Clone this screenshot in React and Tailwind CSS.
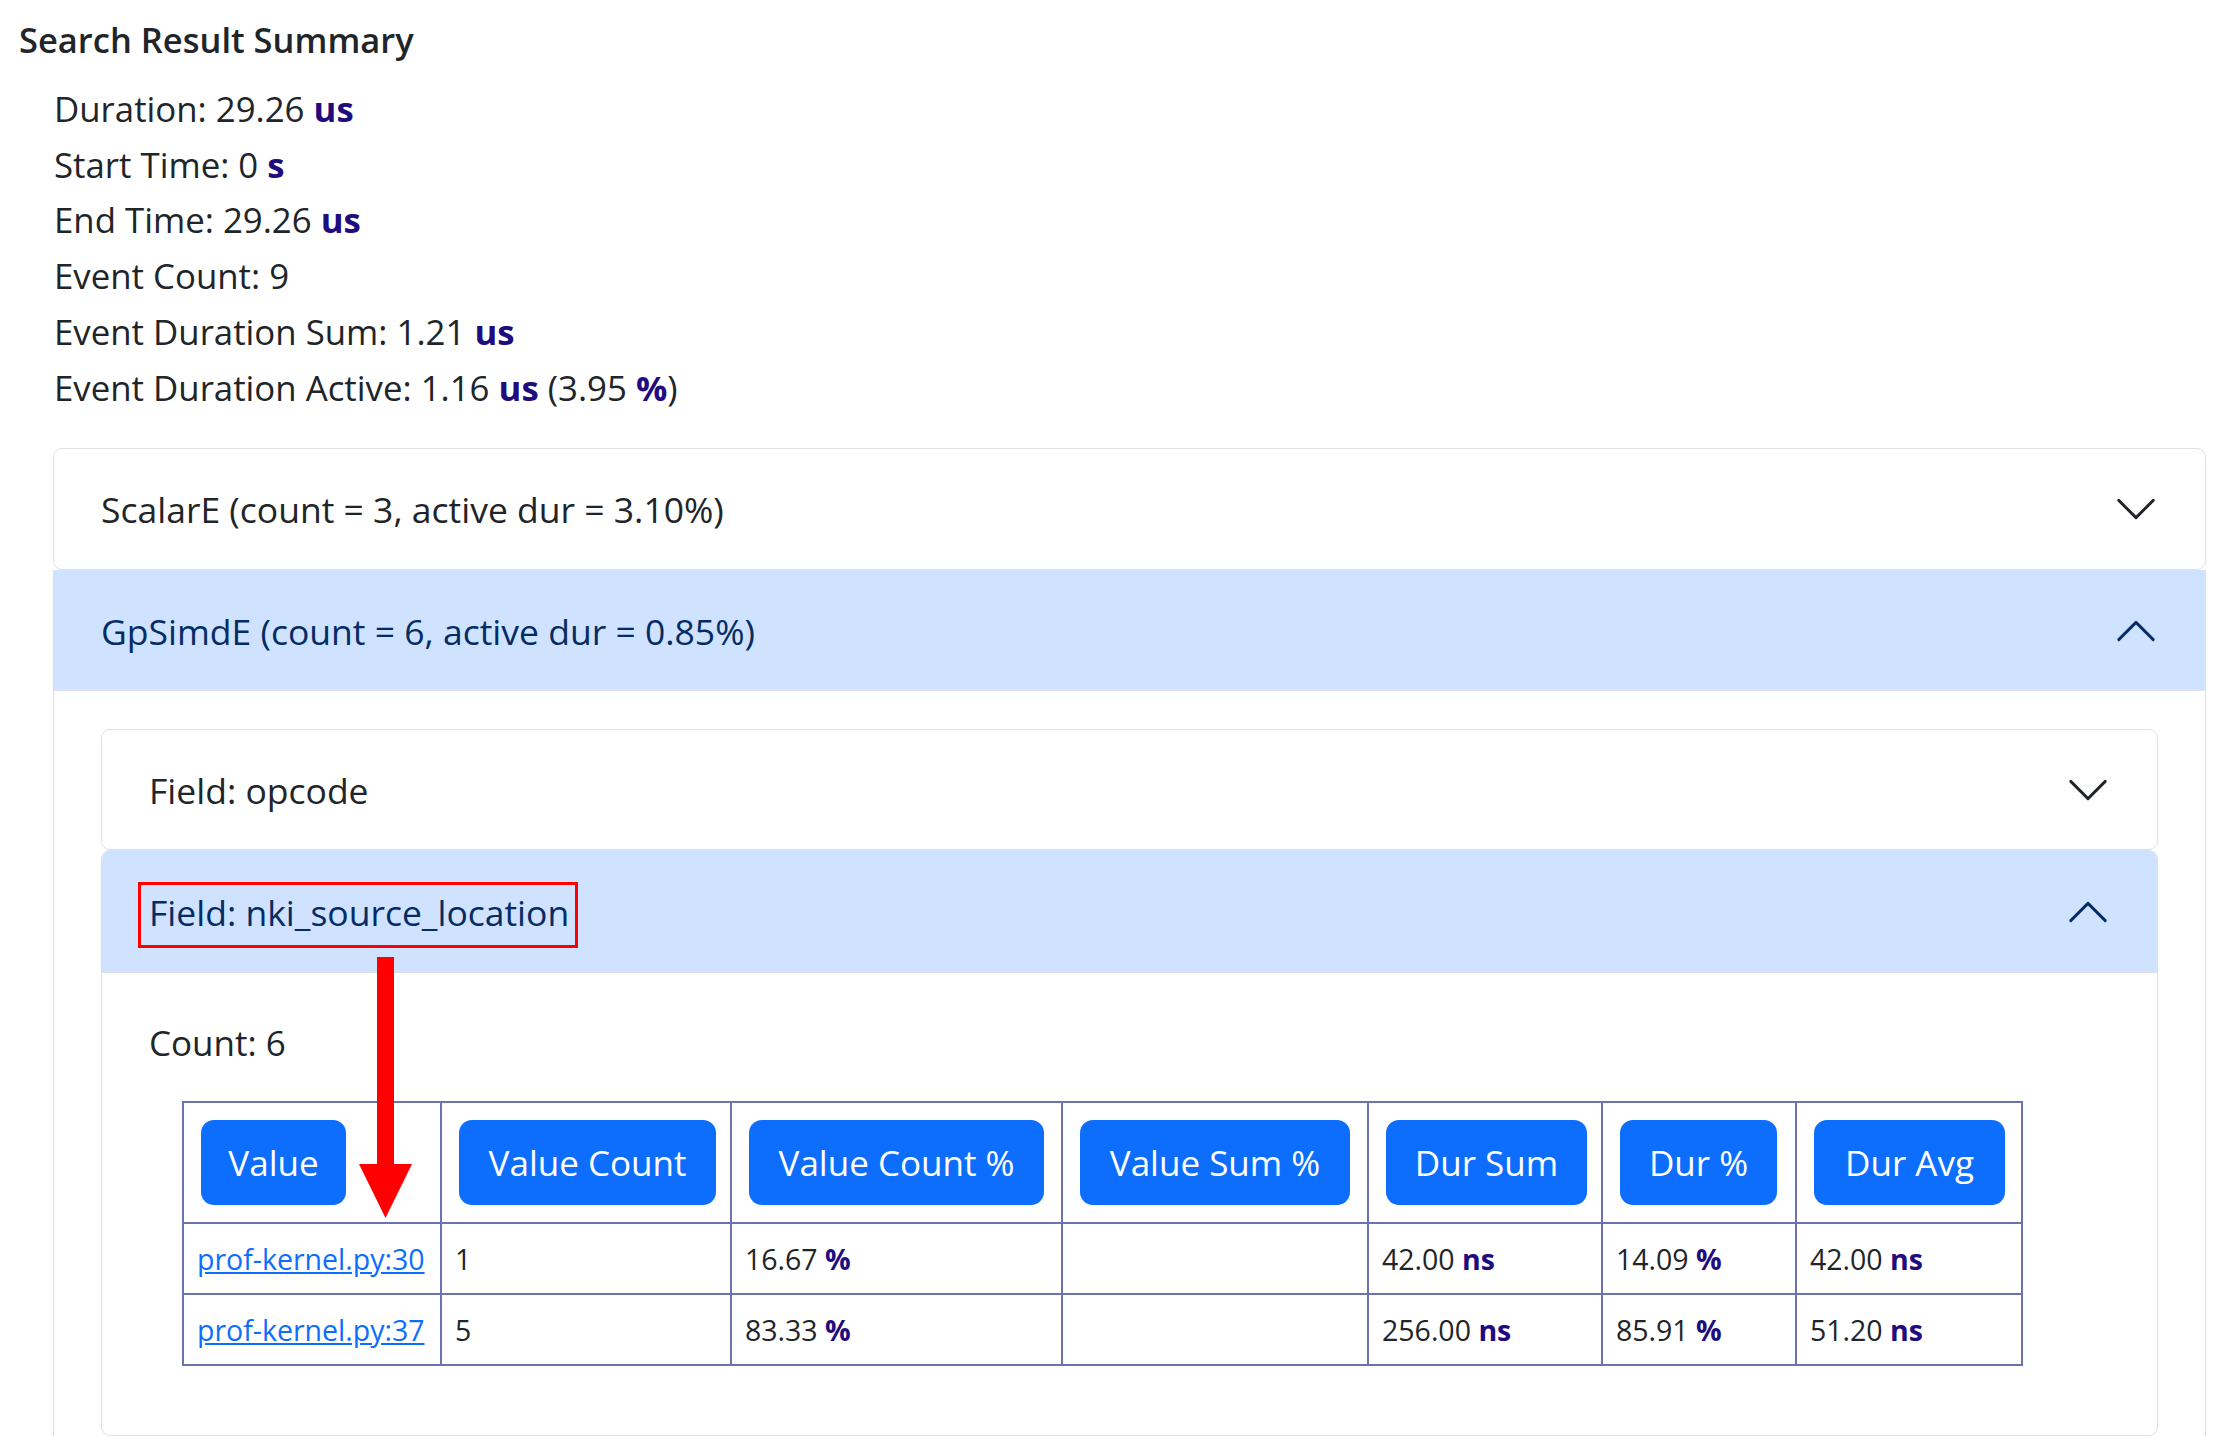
import React from "react";

const unit = "font-bold text-[#1f0c7e]";

function Chevron({ up }) {
  return (
    <svg
      viewBox="0 0 16 16"
      fill="none"
      stroke="currentColor"
      strokeWidth="1"
      strokeLinecap="round"
      strokeLinejoin="round"
      className={`w-[46px] h-[46px] shrink-0 ${up ? "rotate-180 text-[#052c65]" : "text-[#212529]"}`}
    >
      <path d="M2 5L8 11L14 5" />
    </svg>
  );
}

function Header({ open, h, children }) {
  return (
    <div
      className={`flex items-center justify-between pl-[47px] pr-[46px] text-[35.5px] ${h} ${
        open ? "bg-[#cfe2ff] text-[#052c65] shadow-[inset_0_-1px_0_#dee2e6]" : "text-[#212529]"
      }`}
    >
      <div>{children}</div>
      <Chevron up={open} />
    </div>
  );
}

const summary = [
  ["Duration: 29.26 ", "us"],
  ["Start Time: 0 ", "s"],
  ["End Time: 29.26 ", "us"],
  ["Event Count: 9", null],
  ["Event Duration Sum: 1.21 ", "us"],
];

const columns = [
  { label: "Value", col: "w-[258px]", btn: "w-[145px]" },
  { label: "Value Count", col: "w-[290px]", btn: "w-[257px]" },
  { label: "Value Count %", col: "w-[331px]", btn: "w-[295px]" },
  { label: "Value Sum %", col: "w-[306px]", btn: "w-[270px]" },
  { label: "Dur Sum", col: "w-[234px]", btn: "w-[201px]" },
  { label: "Dur %", col: "w-[194px]", btn: "w-[157px]" },
  { label: "Dur Avg", col: "w-[226px]", btn: "w-[191px]" },
];

const rows = [
  ["prof-kernel.py:30", "1", ["16.67", "%"], null, ["42.00", "ns"], ["14.09", "%"], ["42.00", "ns"]],
  ["prof-kernel.py:37", "5", ["83.33", "%"], null, ["256.00", "ns"], ["85.91", "%"], ["51.20", "ns"]],
];

function Cell({ v }) {
  if (v === null) return null;
  if (Array.isArray(v))
    return (
      <>
        {v[0]} <span className={unit}>{v[1]}</span>
      </>
    );
  return v;
}

export default function App() {
  return (
    <div className="relative w-[2239px] h-[1440px] overflow-hidden bg-white text-[#212529] text-[35px] leading-[56px] [font-family:'Segoe_UI','Open_Sans',sans-serif]">
      <div className="pl-[19px] pt-[12px] font-semibold text-[34.5px]">Search Result Summary</div>

      <div className="pl-[54px] mt-[13px] leading-[55.7px] text-[34.8px]">
        {summary.map(([t, u]) => (
          <div key={t}>
            {t}
            {u && <span className={unit}>{u}</span>}
          </div>
        ))}
        <div>
          Event Duration Active: 1.16 <span className={unit}>us</span> (3.95{" "}
          <span className={unit}>%</span>)
        </div>
      </div>

      <div className="ml-[53px] mt-[33px] w-[2153px]">
        <div className="border border-[#dee2e6] rounded-[9px] bg-white">
          <Header h="h-[120px]">ScalarE (count = 3, active dur = 3.10%)</Header>
        </div>

        <div className="border-x border-[#dee2e6]">
          <Header open h="h-[121px]">GpSimdE (count = 6, active dur = 0.85%)</Header>

          <div className="pt-[38px] px-[47px]">
            <div className="border border-[#dee2e6] rounded-[9px]">
              <Header h="h-[119px]">Field: opcode</Header>
            </div>

            <div className="border-x border-b border-[#dee2e6] rounded-[9px] overflow-hidden">
              <Header open h="h-[123px]">
                <span className="relative">
                  Field: nki_source_location
                  <span className="absolute -left-[11px] -right-[9px] -top-[6px] -bottom-[12px] border-[3px] border-[#ff0000]" />
                </span>
              </Header>

              <div className="pt-[42px] px-[47px] pb-[37px]">
                <p className="mb-[30px]">Count: 6</p>
                <table className="ml-[33px] mb-[32px] table-fixed border-collapse w-[1839px] text-[28.5px] leading-[42px]">
                  <thead>
                    <tr>
                      {columns.map((c) => (
                        <th key={c.label} className={`${c.col} border-2 border-[#6c71b0] p-[17px] text-left font-normal`}>
                          <div
                            className={`${c.btn} h-[85px] rounded-[13px] bg-[#0d6efd] text-white text-[35px] flex items-center justify-center whitespace-nowrap`}
                          >
                            {c.label}
                          </div>
                        </th>
                      ))}
                    </tr>
                  </thead>
                  <tbody>
                    {rows.map((r) => (
                      <tr key={r[0]}>
                        <td className="border-2 border-[#6c71b0] h-[71px] px-[13px] whitespace-nowrap">
                          <a href="#" className="text-[#0d6efd] underline">
                            {r[0]}
                          </a>
                        </td>
                        {r.slice(1).map((v, i) => (
                          <td key={i} className="border-2 border-[#6c71b0] h-[71px] px-[13px] whitespace-nowrap">
                            <Cell v={v} />
                          </td>
                        ))}
                      </tr>
                    ))}
                  </tbody>
                </table>
              </div>
            </div>
          </div>
        </div>
      </div>

      {/* annotation arrow */}
      <svg className="absolute left-[359px] top-[957px] w-[53px] h-[262px]" viewBox="0 0 53 262">
        <rect x="18" y="0" width="17" height="210" fill="#ff0000" />
        <polygon points="0,207 53,207 26.5,261" fill="#ff0000" />
      </svg>
    </div>
  );
}
